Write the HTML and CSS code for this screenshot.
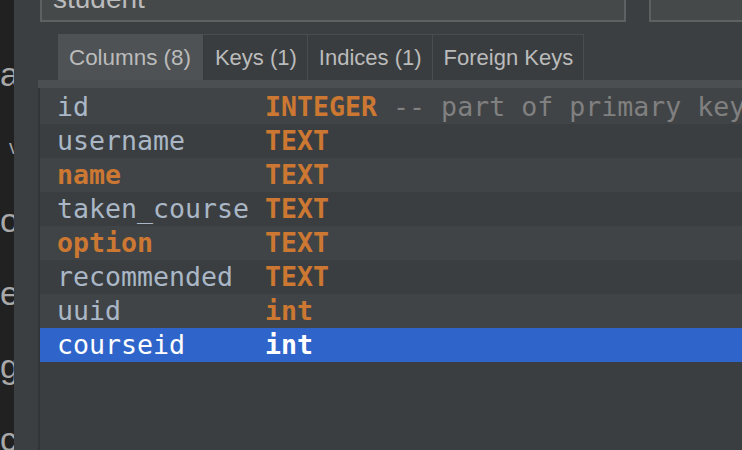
FILE: index.html
```html
<!DOCTYPE html>
<html>
<head>
<meta charset="utf-8">
<link rel="stylesheet" href="styles.css">
</head>
<body>
<div class="strip">
  <div class="sl l1">a</div>
  <div class="sl l2">v</div>
  <div class="sl">o</div>
  <div class="sl">er</div>
  <div class="sl">g</div>
  <div class="sl">c</div>
</div>
<div class="main">
  <div class="fields">
    <div class="field f1"><span class="ftext">student</span></div>
    <div class="field f2"></div>
  </div>
  <div class="tabs">
    <div class="tab sel">Columns (8)</div>
    <div class="tab">Keys (1)</div>
    <div class="tab">Indices (1)</div>
    <div class="tab">Foreign Keys</div>
  </div>
  <div class="sep"></div>
  <div class="table">
    <div class="row odd first"><span class="cn">id</span><span class="ty">INTEGER</span><span class="cm"> -- part of primary key</span></div>
    <div class="row"><span class="cn">username</span><span class="ty">TEXT</span></div>
    <div class="row odd"><span class="cn key">name</span><span class="ty">TEXT</span></div>
    <div class="row"><span class="cn">taken_course</span><span class="ty">TEXT</span></div>
    <div class="row odd"><span class="cn key">option</span><span class="ty">TEXT</span></div>
    <div class="row"><span class="cn">recommended</span><span class="ty">TEXT</span></div>
    <div class="row odd"><span class="cn">uuid</span><span class="ty">int</span></div>
    <div class="row selected"><span class="cn">courseid</span><span class="ty">int</span></div>
  </div>
</div>
</body>
</html>
```
FILE: styles.css
```css
html, body {
  margin: 0;
  padding: 0;
  width: 742px;
  height: 450px;
  overflow: hidden;
  background: #3c3f41;
}
body {
  display: flex;
  font-family: "Liberation Sans", Arial, sans-serif;
}
.strip {
  width: 14px;
  flex: none;
  background: #212121;
  overflow: hidden;
  white-space: nowrap;
  color: #a8a8a8;
  font-size: 34px;
  padding-top: 54px;
  box-sizing: border-box;
}
.sl {
  height: 73px;
  line-height: 40px;
}
.sl.l2 {
  padding-left: 9px;
  font-size: 20px;
}
.main {
  flex: 1;
  padding-left: 24px;
  display: flex;
  flex-direction: column;
  min-width: 0;
}
.fields {
  display: flex;
  gap: 23px;
  margin-left: 2px;
  margin-top: -30px;
  height: 52px;
}
.field {
  box-sizing: border-box;
  height: 52px;
  border: 2px solid #5e6062;
  background: #45494a;
  overflow: hidden;
}
.f1 {
  width: 586px;
  padding: 13px 0 0 11px;
}
.f2 {
  flex: 1;
  margin-right: -20px;
}
.ftext {
  font-size: 28px;
  line-height: 28px;
  color: #bbbbbb;
}
.tabs {
  display: flex;
  margin-top: 12px;
  margin-left: 20px;
  height: 46px;
}
.tab {
  display: flex;
  align-items: center;
  padding: 0 10px 0 11px;
  font-size: 22px;
  color: #bbbbbb;
  background: #3a3d3f;
  border-top: 1px solid #4a4d4f;
  border-right: 1px solid #4a4d4f;
  box-sizing: border-box;
}
.tab.sel {
  padding: 0 12px 0 11px;
  font-size: 22.4px;
  background: #4e5254;
  border-top-color: #4e5254;
  border-right-color: #37393b;
}
.sep {
  height: 8px;
  background: #4b4f51;
}
.table {
  flex: 1;
  border-left: 2px solid #323435;
  background: #3b3e40;
  font-family: "DejaVu Sans Mono", monospace;
  font-size: 26.6px;
}
.row {
  height: 34px;
  line-height: 34px;
  display: flex;
  white-space: nowrap;
  padding-left: 17px;
  background: #3b3e40;
  overflow: hidden;
}
.row.odd {
  background: #414446;
}
.row.first {
  height: 36px;
  padding-top: 2px;
  box-sizing: border-box;
}
.cn {
  width: 208px;
  flex: none;
  color: #a9b7c6;
}
.cn.key {
  color: #cc7832;
  font-weight: bold;
}
.ty {
  color: #cc7832;
  font-weight: bold;
}
.cm {
  color: #808080;
  white-space: pre;
}
.row.selected {
  background: #2f65ca;
}
.row.selected .cn,
.row.selected .ty {
  color: #ffffff;
}
```
